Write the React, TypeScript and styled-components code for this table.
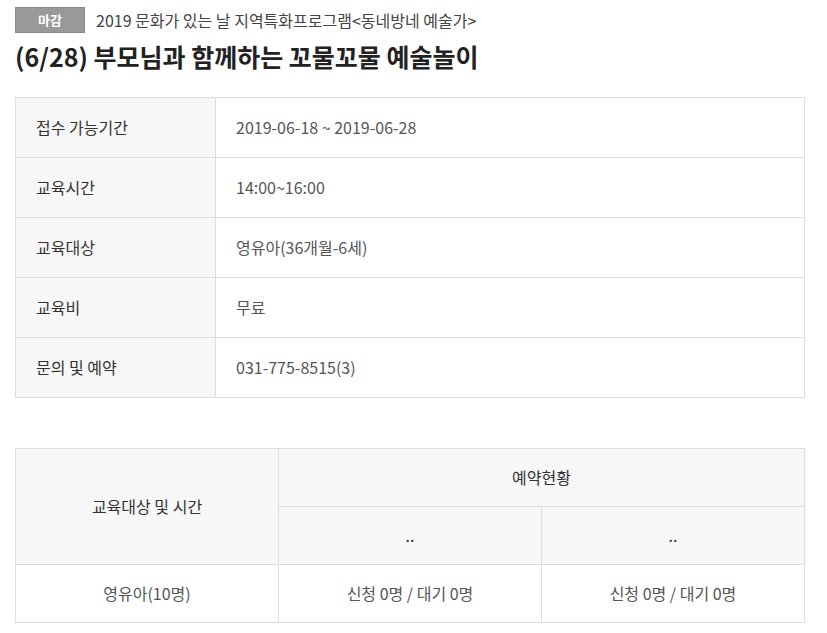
import styled, { createGlobalStyle } from "styled-components";

const GlobalStyle = createGlobalStyle`
  body {
    margin: 0;
    background: #fff;
    font-family: "Noto Sans CJK KR", "Noto Sans", sans-serif;
    color: #333;
  }
`;

const Page = styled.div`
  padding: 7px 22px 0 15px;
`;

const Category = styled.div`
  display: flex;
  align-items: center;
  gap: 11px;
  height: 26px;
`;

const Badge = styled.span`
  box-sizing: border-box;
  width: 70px;
  height: 26px;
  line-height: 24px;
  text-align: center;
  background: #999;
  border: 1px solid #8a8a8a;
  color: #fff;
  font-size: 13px;
  font-weight: 700;
`;

const Sub = styled.span`
  font-size: 16px;
  color: #444;
`;

const Title = styled.h1`
  margin: 6px 0 0;
  font-size: 25px;
  line-height: 34px;
  font-weight: 700;
  color: #222;
`;

const Table = styled.table<{ $top: number; $row: number }>`
  width: 100%;
  margin-top: ${(p) => p.$top}px;
  border-collapse: collapse;
  font-size: 16px;
  table-layout: fixed;

  th,
  td {
    height: ${(p) => p.$row - 3}px;
    padding: 0 20px 2px;
  }
`;

const Th = styled.th<{ $center?: boolean }>`
  border: 1px solid #ddd;
  background: #f7f7f7;
  font-weight: 400;
  color: #333;
  text-align: ${(p) => (p.$center ? "center" : "left")};
`;

const Td = styled.td<{ $center?: boolean }>`
  border: 1px solid #ddd;
  color: #555;
  text-align: ${(p) => (p.$center ? "center" : "left")};
`;

const info: [string, string][] = [
  ["접수 가능기간", "2019-06-18 ~ 2019-06-28"],
  ["교육시간", "14:00~16:00"],
  ["교육대상", "영유아(36개월-6세)"],
  ["교육비", "무료"],
  ["문의 및 예약", "031-775-8515(3)"],
];

export default function App() {
  return (
    <>
      <GlobalStyle />
      <Page>
        <Category>
          <Badge>마감</Badge>
          <Sub>2019 문화가 있는 날 지역특화프로그램&lt;동네방네 예술가&gt;</Sub>
        </Category>
        <Title>(6/28) 부모님과 함께하는 꼬물꼬물 예술놀이</Title>
        <Table $top={24} $row={60}>
          <colgroup>
            <col style={{ width: 200 }} />
            <col />
          </colgroup>
          <tbody>
            {info.map(([k, v]) => (
              <tr key={k}>
                <Th>{k}</Th>
                <Td>{v}</Td>
              </tr>
            ))}
          </tbody>
        </Table>
        <Table $top={50} $row={58}>
          <thead>
            <tr>
              <Th $center rowSpan={2}>교육대상 및 시간</Th>
              <Th $center colSpan={2}>예약현황</Th>
            </tr>
            <tr>
              <Th $center>..</Th>
              <Th $center>..</Th>
            </tr>
          </thead>
          <tbody>
            <tr>
              <Td $center>영유아(10명)</Td>
              <Td $center>신청 0명 / 대기 0명</Td>
              <Td $center>신청 0명 / 대기 0명</Td>
            </tr>
          </tbody>
        </Table>
      </Page>
    </>
  );
}
